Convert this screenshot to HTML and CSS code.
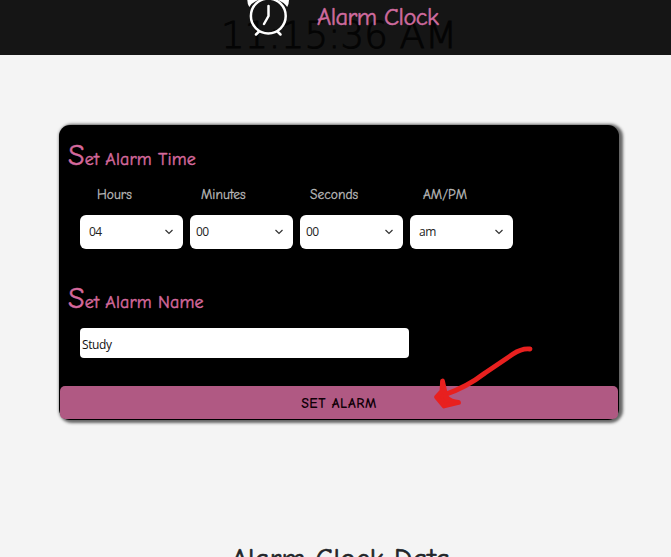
FILE: index.html
```html
<!DOCTYPE html>
<html lang="en">
<head>
<meta charset="utf-8">
<title>Alarm Clock</title>
<link rel="stylesheet" href="styles.css">
</head>
<body>
<header class="header">
  <svg class="logo" viewBox="0 0 46 40" fill="none" stroke="#fff" stroke-width="2.5" stroke-linecap="round">
    <path d="M1.3 0H12.5Q6 2.5 3.3 7Q1.3 4 1.3 0ZM43 0H32Q38.5 2.500 41.200 7Q43 4 43 0Z" fill="#fff" stroke="none"/>
    <circle cx="22.3" cy="16" r="17.4"/>
    <path d="M22.5 6V16L18 24M13 31.5L10 34.500M31.5 31.500L34.500 34.500"/>
  </svg>
  <span class="brand">Alarm Clock</span>
</header>
<svg class="time" viewBox="0 0 240 40"><text x="0" y="33.500" textLength="236" lengthAdjust="spacingAndGlyphs">11:15:36 AM</text></svg>
<main>
  <form class="card">
    <h2 class="title">Set Alarm Time</h2>
    <div class="fields">
      <div class="field"><label>Hours</label><div class="select first"><span>04</span><svg class="chevron" viewBox="0 0 10 6"><path d="M1.5 1L5 4.5L8.5 1"/></svg></div></div>
      <div class="field"><label class="minutes">Minutes</label><div class="select"><span>00</span><svg class="chevron" viewBox="0 0 10 6"><path d="M1.5 1L5 4.5L8.5 1"/></svg></div></div>
      <div class="field"><label class="seconds">Seconds</label><div class="select"><span>00</span><svg class="chevron" viewBox="0 0 10 6"><path d="M1.5 1L5 4.5L8.5 1"/></svg></div></div>
      <div class="field"><label class="period">AM/PM</label><div class="select first"><span>am</span><svg class="chevron" viewBox="0 0 10 6"><path d="M1.5 1L5 4.5L8.5 1"/></svg></div></div>
    </div>
    <h2 class="title name">Set Alarm Name</h2>
    <input class="input" type="text" value="Study">
    <button class="submit" type="button">SET ALARM</button>
    <svg class="arrow" viewBox="0 0 104 70" fill="none" stroke="#e8201f" stroke-width="4.8" stroke-linecap="round" stroke-linejoin="round">
      <path d="M99 8Q91 7 82 13L54 32Q36 46 13 54"/>
      <path d="M11.500 40L11 50L5.500 56L13 65L27.500 61.500Q20 61 15 56Z" fill="#e8201f"/>
    </svg>
  </form>
  <h1 class="data">Alarm Clock Data</h1>
</main>
</body>
</html>
```

FILE: styles.css
```css
* { box-sizing: border-box; }
html, body { height: 100%; }
body {
  margin: 0;
  overflow: hidden;
  position: relative;
  background: #f4f4f4;
  font-family: "Comic Sans MS", "Comic Neue", Lato, sans-serif;
}
.header {
  height: 55px;
  padding-left: 246px;
  display: flex;
  background: #151515;
}
.logo { width: 46px; height: 40px; flex: none; position: relative; z-index: 2; }
.brand {
  margin-left: 25px;
  font-size: 24.5px;
  line-height: 35px;
  letter-spacing: -.55px;
  color: #cf6b9f;
  -webkit-text-stroke: .5px #cf6b9f;
  position: relative;
  z-index: 2;
}
.time {
  position: absolute;
  left: 221px;
  top: 14px;
  width: 240px;
  height: 40px;
  overflow: visible;
  font: 200 37px "DejaVu Sans", sans-serif;
  fill: #040404;
  stroke: #040404;
  stroke-width: .9px;
}
.card {
  position: relative;
  width: 560px;
  height: 295px;
  margin: 70px 0 0 59px;
  padding-top: 11px;
  border-radius: 11px;
  background: #000;
  box-shadow: 2px 1px 3px 2px #666;
}
.title {
  margin: 0 0 0 9px;
  height: 40px;
  line-height: 39px;
  font-size: 18px;
  font-weight: 400;
  letter-spacing: .15px;
  color: #d5699c;
  -webkit-text-stroke: .45px #d5699c;
}
.title::first-letter { font-size: 30px; }
.fields { display: flex; gap: 7px; margin: 9px 0 0 21px; }
.field { width: 103px; }
label {
  display: block;
  height: 30px;
  padding-left: 17px;
  line-height: 20px;
  font-size: 13.5px;
  letter-spacing: .02px;
  color: #b9b9b9;
  -webkit-text-stroke: .3px #b9b9b9;
}
.minutes { padding-left: 11px; }
.seconds { padding-left: 10px; }
.period { padding-left: 13px; }
.select {
  height: 34px;
  padding: 0 9px 0 6px;
  display: flex;
  align-items: center;
  justify-content: space-between;
  border-radius: 6px;
  background: #fff;
  color: #222;
  font: 12px "Open Sans", sans-serif;
  letter-spacing: -.5px;
}
.select span { position: relative; top: -.5px; }
.first { padding-left: 9px; }
.chevron { width: 10px; height: 6px; fill: none; stroke: #333; stroke-width: 1.2; }
.name { margin-top: 30px; }
.input {
  display: block;
  width: 329px;
  height: 30px;
  margin: 9px 0 0 21px;
  padding: 2px 2px 0;
  border: 0;
  border-radius: 4px;
  background: #fff;
  color: #111;
  font: 12px "Open Sans", sans-serif;
  letter-spacing: -.4px;
}
.submit {
  display: block;
  width: 558px;
  height: 33px;
  margin: 28px 0 0 1px;
  padding: 1px 0 0;
  border: 0;
  border-radius: 5px;
  background: #b05983;
  color: #100008;
  font: 700 14px "Comic Sans MS", "Comic Neue", Lato, sans-serif;
  letter-spacing: .6px;
}
.arrow { position: absolute; left: 372px; top: 216px; width: 104px; height: 70px; }
.data {
  margin: 119px 0 0 231px;
  font-size: 29px;
  line-height: 40px;
  font-weight: 400;
  letter-spacing: .2px;
  color: #222529;
  -webkit-text-stroke: .6px #222529;
  white-space: nowrap;
}
```
